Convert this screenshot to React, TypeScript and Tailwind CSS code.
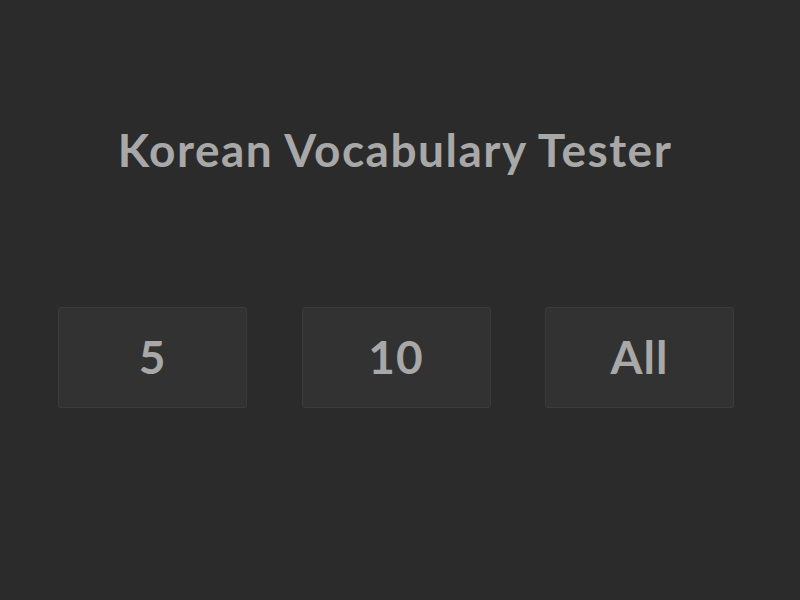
import React from 'react';

const counts = ['5', '10', 'All'];

const App = () => {
    return (
        <div
            className="w-[800px] h-[600px] bg-[#2b2b2b] flex flex-col items-center"
            style={{ fontFamily: 'Lato, "Noto Sans", sans-serif' }}
        >
            {/* Title */}
            <h1 className="mt-[116px] mr-[10px] h-[68px] flex items-center text-[46px] font-bold tracking-[1.5px] text-[#a8a8a8] leading-none">
                Korean Vocabulary Tester
            </h1>

            {/* Count options */}
            <div className="mt-[123px] w-full pl-[58px] pr-[66px] flex justify-between">
                {counts.map((c) => (
                    <button
                        key={c}
                        className="w-[189px] h-[101px] bg-[#323232] border border-[#3b3b3b] rounded-[3px] flex items-center justify-center pb-[2px] text-[46px] font-bold tracking-[1px] text-[#a8a8a8] leading-none"
                    >
                        {c}
                    </button>
                ))}
            </div>
        </div>
    );
};

export default App;
